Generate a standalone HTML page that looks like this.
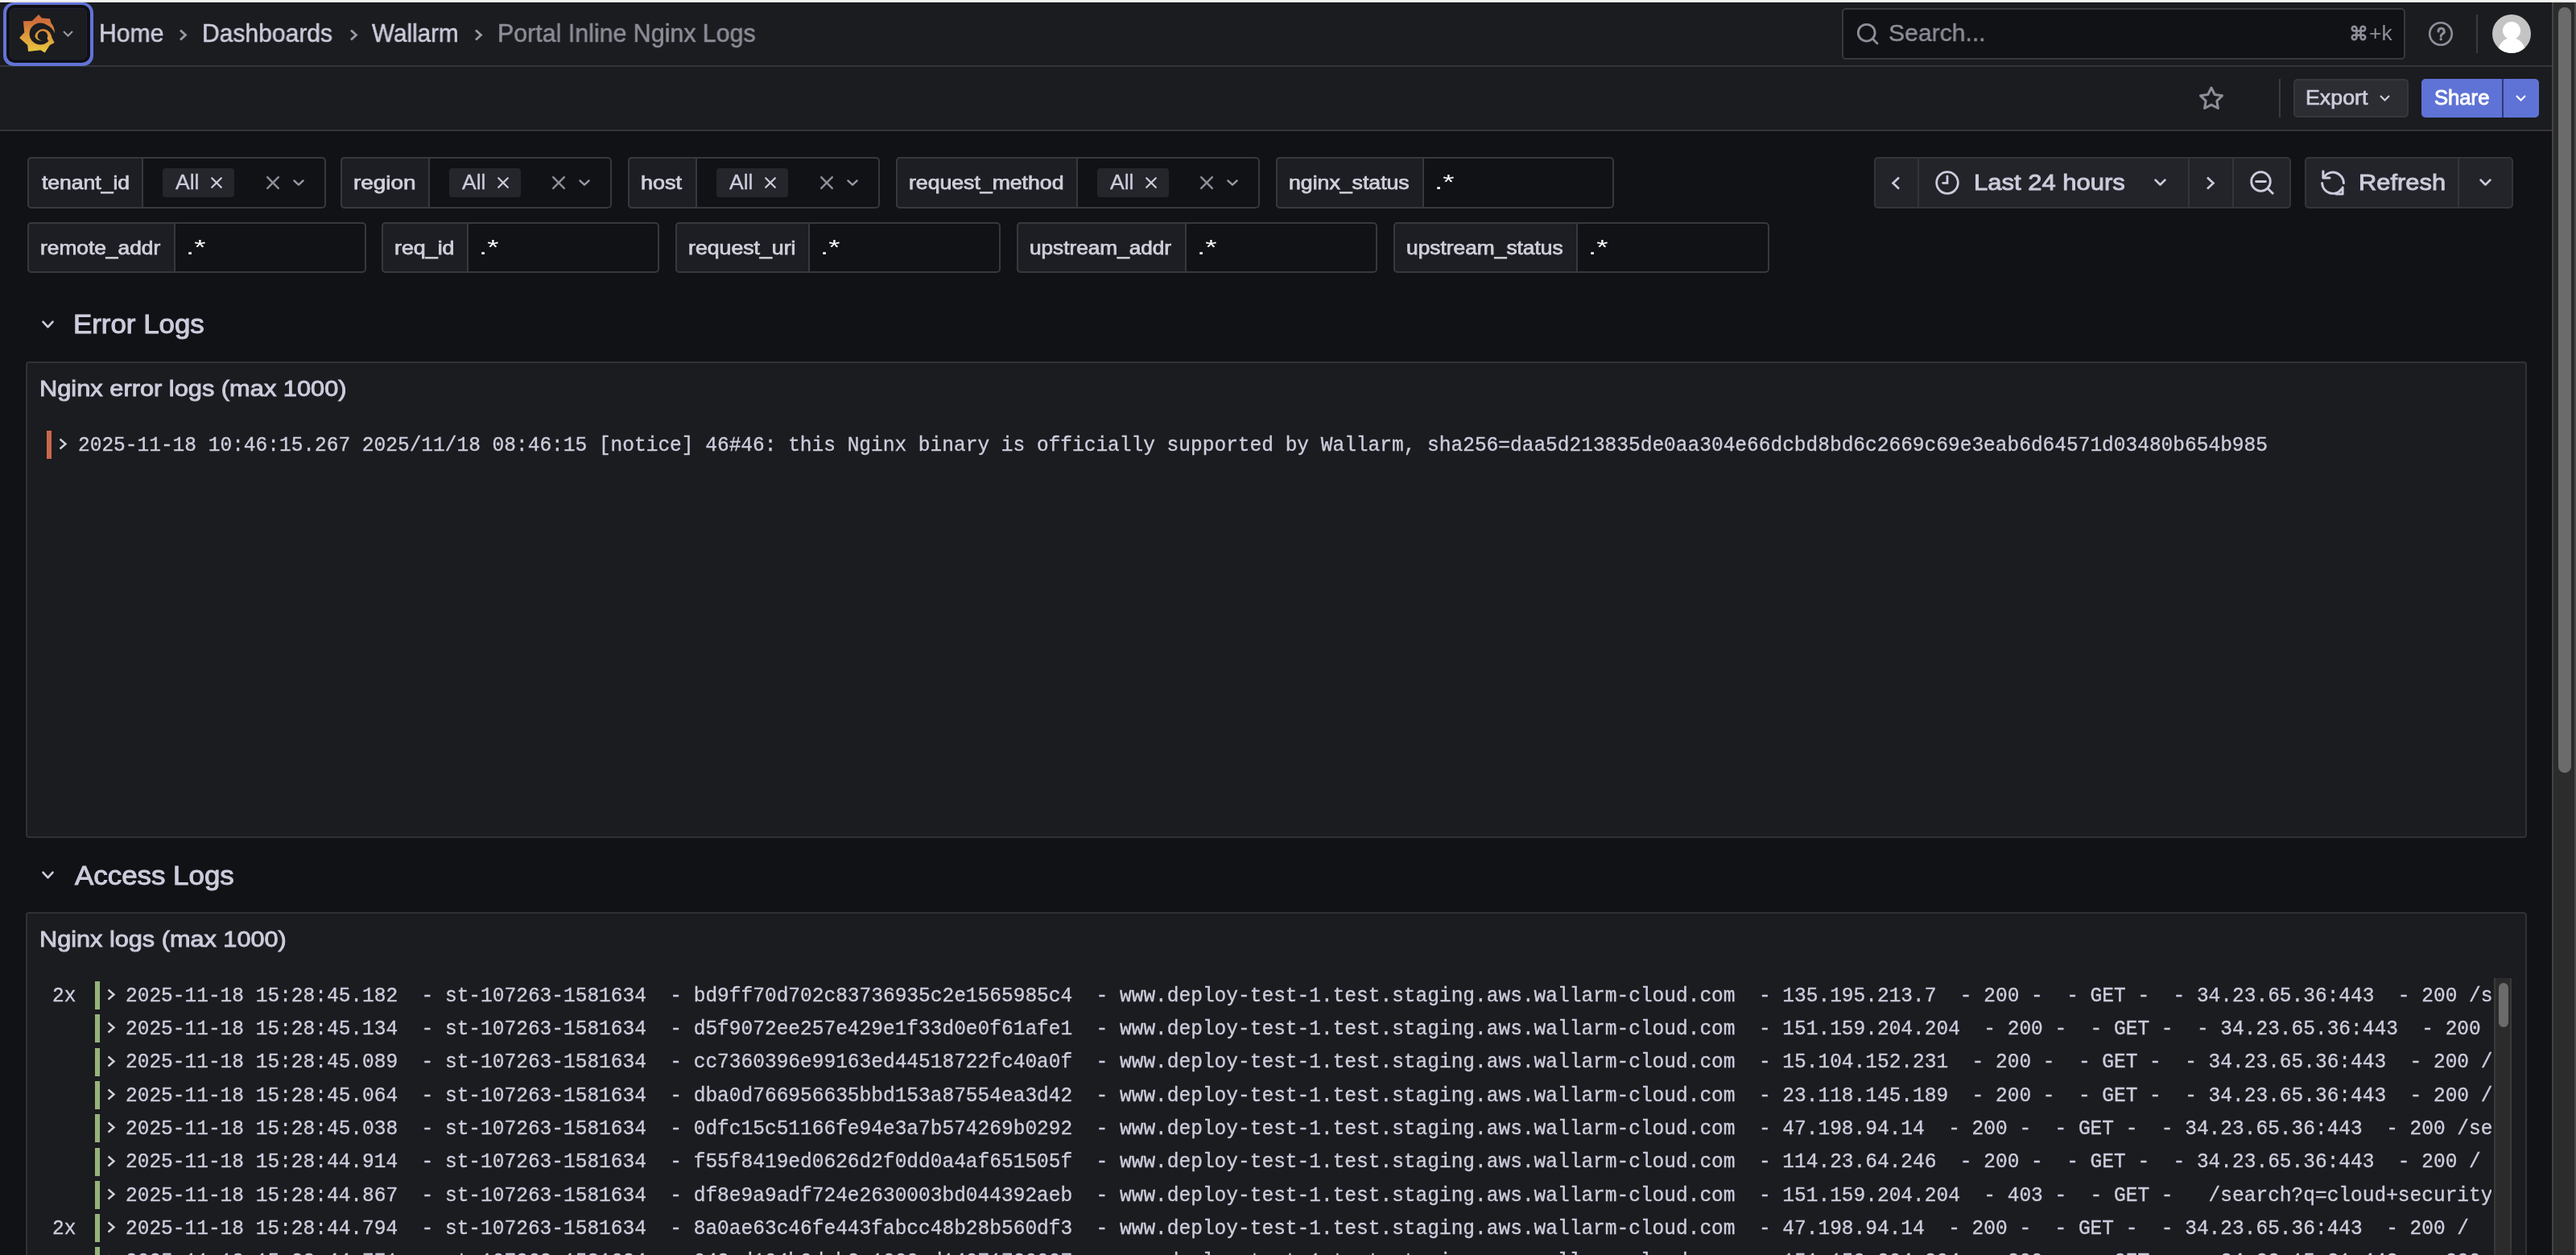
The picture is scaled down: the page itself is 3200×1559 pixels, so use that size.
<!DOCTYPE html><html><head><meta charset="utf-8"><style>
html,body{margin:0;padding:0;width:3200px;height:1559px;overflow:hidden;background:#111216;}
.t{position:absolute;white-space:pre;transform-origin:0 0;font-family:"Liberation Sans",sans-serif;will-change:transform;}
.m{position:absolute;white-space:pre;font-family:"Liberation Mono",monospace;font-size:24.5px;line-height:30px;color:#ccccdc;will-change:transform;transform:scale(1,1.09);transform-origin:0 21.5px;-webkit-text-stroke:0.35px #ccccdc;}
.r{position:absolute;box-sizing:border-box;}
svg.r{overflow:visible;}
@media (max-width:2400px){html{zoom:0.5;}}
</style></head><body>
<div class="r" style="left:0px;top:0px;width:3200px;height:1px;background:#ffffff"></div>
<div class="r" style="left:0px;top:1px;width:3200px;height:1px;background:#e1e1df"></div>
<div class="r" style="left:0px;top:2px;width:3200px;height:1px;background:#efefed"></div>
<div class="r" style="left:0px;top:3px;width:3200px;height:1px;background:#0f1015"></div>
<div class="r" style="left:0px;top:4px;width:3170px;height:77px;background:#1b1c20"></div>
<div class="r" style="left:0px;top:81px;width:3170px;height:2px;background:#34353a"></div>
<div class="r" style="left:0px;top:83px;width:3170px;height:78px;background:#1b1c20"></div>
<div class="r" style="left:0px;top:161px;width:3170px;height:2px;background:#34353a"></div>
<div class="r" style="left:4px;top:3px;width:112px;height:79px;background:#6373d6;border-radius:13px"></div>
<div class="r" style="left:8px;top:6px;width:104px;height:72px;background:#0f1015;border-radius:10px"></div>
<div class="r" style="left:12px;top:10px;width:96px;height:64px;background:#1b1c20;border-radius:6px;border:1px solid #20232f"></div>
<svg class="r" style="left:16px;top:12px;width:60px;height:60px;" viewBox="16 12 60 60" preserveAspectRatio="none"><defs><linearGradient id="lg" gradientUnits="userSpaceOnUse" x1="0" y1="18" x2="0" y2="66"><stop offset="0" stop-color="#d2683a"/><stop offset="0.2" stop-color="#d06f3a"/><stop offset="0.55" stop-color="#df9a3c"/><stop offset="1" stop-color="#e6cb3e"/></linearGradient></defs><path fill="url(#lg)" d="M48,18 L51.9,22.5 L62.1,23.2 L63.5,28.5 Q67.5,33 68.1,40.9 L63.2,44.2 L64.5,47 L67.6,52.9 L61.9,56 L55.7,65.5 L50.4,62.2 L35.1,63.9 L34.2,56 L24.1,46.9 L30.3,40.2 L28.9,26.3 L39.9,25.9 Z"/><circle cx="50.2" cy="42" r="13.6" fill="#1b1c20"/><path fill="#1b1c20" d="M58,31 Q65,34 68.2,41.5 L63.5,45 Z"/><path fill="url(#lg)" d="M64,48.5 A10.2,10.2 0 1 0 43.3,44.8 Q44.5,51.2 54.8,50.6 Q49.5,51 47.2,47.5 A6.3,6.3 0 1 1 58.6,47.6 L60,51 Z"/></svg>
<svg class="r" style="left:78px;top:38px;width:13px;height:8px;" viewBox="0 0 13 8" preserveAspectRatio="none"><path d="M1 1 L6.5 6.5 L12 1" fill="none" stroke="#9a9aa5" stroke-width="2"/></svg>
<div class="t" style="left:123.23px;top:24.07px;font-size:30.52px;line-height:34.10px;color:#ccccdc;font-weight:normal;transform:scaleX(0.9876);-webkit-text-stroke:0.5px #ccccdc;">Home</div>
<div class="t" style="left:251.03px;top:24.07px;font-size:30.52px;line-height:34.10px;color:#ccccdc;font-weight:normal;transform:scaleX(0.9846);-webkit-text-stroke:0.5px #ccccdc;">Dashboards</div>
<div class="t" style="left:462.17px;top:24.07px;font-size:30.52px;line-height:34.10px;color:#ccccdc;font-weight:normal;transform:scaleX(0.9721);-webkit-text-stroke:0.5px #ccccdc;">Wallarm</div>
<div class="t" style="left:617.91px;top:24.07px;font-size:30.52px;line-height:34.10px;color:#8e8e99;font-weight:normal;transform:scaleX(0.9951);-webkit-text-stroke:0.5px #8e8e99;">Portal Inline Nginx Logs</div>
<svg class="r" style="left:222px;top:36px;width:11px;height:15px;" viewBox="0 0 11 15" preserveAspectRatio="none"><path d="M2 1.5 L8.5 7.5 L2 13.5" fill="none" stroke="#9a9aa4" stroke-width="2.8"/></svg>
<svg class="r" style="left:433.7px;top:36px;width:11.0px;height:15px;" viewBox="0 0 11 15" preserveAspectRatio="none"><path d="M2 1.5 L8.5 7.5 L2 13.5" fill="none" stroke="#9a9aa4" stroke-width="2.8"/></svg>
<svg class="r" style="left:589px;top:36px;width:11px;height:15px;" viewBox="0 0 11 15" preserveAspectRatio="none"><path d="M2 1.5 L8.5 7.5 L2 13.5" fill="none" stroke="#9a9aa4" stroke-width="2.8"/></svg>
<div class="r" style="left:2288px;top:10px;width:700px;height:64px;background:#111216;border:2px solid #37383d;border-radius:5px"></div>
<svg class="r" style="left:2306px;top:28px;width:28px;height:28px;" viewBox="0 0 28 28" preserveAspectRatio="none"><circle cx="12.7" cy="12.7" r="10.4" fill="none" stroke="#8e8e99" stroke-width="2.8"/><path d="M20.6 20.6 L26 26" stroke="#8e8e99" stroke-width="2.8" stroke-linecap="round"/></svg>
<div class="t" style="left:2345.73px;top:24.40px;font-size:30.38px;line-height:33.94px;color:#8e8e99;font-weight:normal;transform:scaleX(0.9922);-webkit-text-stroke:0.4px #8e8e99;">Search...</div>
<svg class="r" style="left:2920px;top:31px;width:20px;height:20px;" viewBox="0 0 20 20" preserveAspectRatio="none"><path d="M7.4,7.4 V4.6 A2.8,2.8 0 1 0 4.6,7.4 H15.4 A2.8,2.8 0 1 0 12.6,4.6 V15.4 A2.8,2.8 0 1 0 15.4,12.6 H4.6 A2.8,2.8 0 1 0 7.4,15.4 Z" fill="none" stroke="#8e8e99" stroke-width="2.7"/></svg>
<div class="t" style="left:2942.71px;top:27.01px;font-size:25.73px;line-height:28.74px;color:#8e8e99;font-weight:normal;transform:scaleX(1.0274);">+k</div>
<svg class="r" style="left:3016px;top:26px;width:32px;height:32px;" viewBox="0 0 32 32" preserveAspectRatio="none"><circle cx="16" cy="16" r="13.8" fill="none" stroke="#8e8e99" stroke-width="2.6"/><path d="M13,13 A3.6,3.6 0 1 1 18,16.2 Q16.2,17.2 16.2,19.2" fill="none" stroke="#8e8e99" stroke-width="3" stroke-linecap="round"/><circle cx="16.2" cy="22.8" r="1.7" fill="#8e8e99"/></svg>
<div class="r" style="left:3076px;top:18px;width:2px;height:48px;background:#3a3b40"></div>
<svg class="r" style="left:3096px;top:18px;width:48px;height:48px;" viewBox="0 0 48 48" preserveAspectRatio="none"><defs><clipPath id="av"><circle cx="24" cy="24" r="24"/></clipPath></defs><circle cx="24" cy="24" r="24" fill="#c4c4c4"/><g clip-path="url(#av)" fill="#ffffff"><circle cx="24" cy="20" r="11"/><ellipse cx="24" cy="49" rx="17.5" ry="20"/></g></svg>
<svg class="r" style="left:2731px;top:107px;width:32px;height:30px;" viewBox="0 0 32 30" preserveAspectRatio="none"><path d="M16 2 L20.2 10.5 L29.5 11.8 L22.8 18.3 L24.4 27.5 L16 23.1 L7.6 27.5 L9.2 18.3 L2.5 11.8 L11.8 10.5 Z" fill="none" stroke="#8e8e99" stroke-width="3" stroke-linejoin="round"/></svg>
<div class="r" style="left:2831px;top:98px;width:2px;height:48px;background:#3a3b40"></div>
<div class="r" style="left:2849px;top:98px;width:143px;height:48px;background:#2c2d33;border:2px solid #36373c;border-radius:5px"></div>
<div class="t" style="left:2863.90px;top:106.94px;font-size:25.15px;line-height:28.09px;color:#ccccdc;font-weight:normal;transform:scaleX(1.0649);-webkit-text-stroke:0.7px #ccccdc;">Export</div>
<svg class="r" style="left:2956px;top:118px;width:13px;height:8px;" viewBox="0 0 13 8" preserveAspectRatio="none"><path d="M1 1 L6.5 6.5 L12 1" fill="none" stroke="#ccccdc" stroke-width="2.2"/></svg>
<div class="r" style="left:3008px;top:98px;width:100px;height:48px;background:#5f73d6;border-radius:5px 0 0 5px"></div>
<div class="r" style="left:3108px;top:98px;width:2px;height:48px;background:#2e3a7a"></div>
<div class="r" style="left:3110px;top:98px;width:44px;height:48px;background:#5f73d6;border-radius:0 5px 5px 0"></div>
<div class="t" style="left:3023.84px;top:107.00px;font-size:25.29px;line-height:28.25px;color:#ffffff;font-weight:normal;transform:scaleX(1.0136);-webkit-text-stroke:0.9px #ffffff;">Share</div>
<svg class="r" style="left:3125px;top:118px;width:13px;height:8px;" viewBox="0 0 13 8" preserveAspectRatio="none"><path d="M1 1 L6.5 6.5 L12 1" fill="none" stroke="#ffffff" stroke-width="2.2"/></svg>
<div class="r" style="left:3170px;top:3px;width:2px;height:1556px;background:#434343"></div>
<div class="r" style="left:3172px;top:3px;width:26px;height:1556px;background:#2c2c2c"></div>
<div class="r" style="left:3198px;top:3px;width:2px;height:1556px;background:#4a4a4a"></div>
<div class="r" style="left:3178px;top:9px;width:16px;height:951px;background:#6b6b6b;border-radius:8px"></div>
<div class="r" style="left:34px;top:195px;width:371px;height:64px;background:#111216;border:2px solid #37383d;border-radius:5px"></div>
<div class="r" style="left:34px;top:195px;width:144px;height:64px;background:#1d1e23;border:2px solid #37383d;border-radius:5px 0 0 5px"></div>
<div class="t" style="left:51.60px;top:214.15px;font-size:23.26px;line-height:25.98px;color:#d0d0dc;font-weight:normal;transform:scaleX(1.1402);-webkit-text-stroke:0.75px #d0d0dc;">tenant_id</div>
<div class="r" style="left:202px;top:209px;width:89px;height:36px;background:#25262c;border-radius:4px"></div>
<div class="t" style="left:218.15px;top:211.71px;font-size:26.16px;line-height:29.23px;color:#ccccdc;font-weight:normal;transform:scaleX(1.0156);-webkit-text-stroke:0.3px #ccccdc;">All</div>
<svg class="r" style="left:262px;top:220px;width:14px;height:14px;" viewBox="0 0 14 14" preserveAspectRatio="none"><path d="M1.2 1.2 L12.8 12.8 M12.8 1.2 L1.2 12.8" fill="none" stroke="#ccccdc" stroke-width="2.2" stroke-linecap="round"/></svg>
<svg class="r" style="left:331px;top:219px;width:16px;height:16px;" viewBox="0 0 16 16" preserveAspectRatio="none"><path d="M1.2 1.2 L14.8 14.8 M14.8 1.2 L1.2 14.8" fill="none" stroke="#8e8e99" stroke-width="2.5" stroke-linecap="round"/></svg>
<svg class="r" style="left:364px;top:223px;width:14px;height:8px;" viewBox="0 0 14 8" preserveAspectRatio="none"><path d="M1.4 1.4 L7 6.6 L12.6 1.4" fill="none" stroke="#9a9aa5" stroke-width="2.4" stroke-linecap="round" stroke-linejoin="round"/></svg>
<div class="r" style="left:423px;top:195px;width:337px;height:64px;background:#111216;border:2px solid #37383d;border-radius:5px"></div>
<div class="r" style="left:423px;top:195px;width:111px;height:64px;background:#1d1e23;border:2px solid #37383d;border-radius:5px 0 0 5px"></div>
<div class="t" style="left:439.14px;top:214.15px;font-size:23.26px;line-height:25.98px;color:#d0d0dc;font-weight:normal;transform:scaleX(1.2015);-webkit-text-stroke:0.75px #d0d0dc;">region</div>
<div class="r" style="left:558px;top:209px;width:89px;height:36px;background:#25262c;border-radius:4px"></div>
<div class="t" style="left:574.15px;top:211.71px;font-size:26.16px;line-height:29.23px;color:#ccccdc;font-weight:normal;transform:scaleX(1.0156);-webkit-text-stroke:0.3px #ccccdc;">All</div>
<svg class="r" style="left:618px;top:220px;width:14px;height:14px;" viewBox="0 0 14 14" preserveAspectRatio="none"><path d="M1.2 1.2 L12.8 12.8 M12.8 1.2 L1.2 12.8" fill="none" stroke="#ccccdc" stroke-width="2.2" stroke-linecap="round"/></svg>
<svg class="r" style="left:686px;top:219px;width:16px;height:16px;" viewBox="0 0 16 16" preserveAspectRatio="none"><path d="M1.2 1.2 L14.8 14.8 M14.8 1.2 L1.2 14.8" fill="none" stroke="#8e8e99" stroke-width="2.5" stroke-linecap="round"/></svg>
<svg class="r" style="left:719px;top:223px;width:14px;height:8px;" viewBox="0 0 14 8" preserveAspectRatio="none"><path d="M1.4 1.4 L7 6.6 L12.6 1.4" fill="none" stroke="#9a9aa5" stroke-width="2.4" stroke-linecap="round" stroke-linejoin="round"/></svg>
<div class="r" style="left:780px;top:195px;width:313px;height:64px;background:#111216;border:2px solid #37383d;border-radius:5px"></div>
<div class="r" style="left:780px;top:195px;width:86px;height:64px;background:#1d1e23;border:2px solid #37383d;border-radius:5px 0 0 5px"></div>
<div class="t" style="left:796.13px;top:214.15px;font-size:23.26px;line-height:25.98px;color:#d0d0dc;font-weight:normal;transform:scaleX(1.1619);-webkit-text-stroke:0.75px #d0d0dc;">host</div>
<div class="r" style="left:890px;top:209px;width:89px;height:36px;background:#25262c;border-radius:4px"></div>
<div class="t" style="left:906.15px;top:211.71px;font-size:26.16px;line-height:29.23px;color:#ccccdc;font-weight:normal;transform:scaleX(1.0156);-webkit-text-stroke:0.3px #ccccdc;">All</div>
<svg class="r" style="left:950px;top:220px;width:14px;height:14px;" viewBox="0 0 14 14" preserveAspectRatio="none"><path d="M1.2 1.2 L12.8 12.8 M12.8 1.2 L1.2 12.8" fill="none" stroke="#ccccdc" stroke-width="2.2" stroke-linecap="round"/></svg>
<svg class="r" style="left:1019px;top:219px;width:16px;height:16px;" viewBox="0 0 16 16" preserveAspectRatio="none"><path d="M1.2 1.2 L14.8 14.8 M14.8 1.2 L1.2 14.8" fill="none" stroke="#8e8e99" stroke-width="2.5" stroke-linecap="round"/></svg>
<svg class="r" style="left:1052px;top:223px;width:14px;height:8px;" viewBox="0 0 14 8" preserveAspectRatio="none"><path d="M1.4 1.4 L7 6.6 L12.6 1.4" fill="none" stroke="#9a9aa5" stroke-width="2.4" stroke-linecap="round" stroke-linejoin="round"/></svg>
<div class="r" style="left:1113px;top:195px;width:452px;height:64px;background:#111216;border:2px solid #37383d;border-radius:5px"></div>
<div class="r" style="left:1113px;top:195px;width:226px;height:64px;background:#1d1e23;border:2px solid #37383d;border-radius:5px 0 0 5px"></div>
<div class="t" style="left:1129.23px;top:214.15px;font-size:23.26px;line-height:25.98px;color:#d0d0dc;font-weight:normal;transform:scaleX(1.1453);-webkit-text-stroke:0.75px #d0d0dc;">request_method</div>
<div class="r" style="left:1363px;top:209px;width:89px;height:36px;background:#25262c;border-radius:4px"></div>
<div class="t" style="left:1379.15px;top:211.71px;font-size:26.16px;line-height:29.23px;color:#ccccdc;font-weight:normal;transform:scaleX(1.0156);-webkit-text-stroke:0.3px #ccccdc;">All</div>
<svg class="r" style="left:1423px;top:220px;width:14px;height:14px;" viewBox="0 0 14 14" preserveAspectRatio="none"><path d="M1.2 1.2 L12.8 12.8 M12.8 1.2 L1.2 12.8" fill="none" stroke="#ccccdc" stroke-width="2.2" stroke-linecap="round"/></svg>
<svg class="r" style="left:1491px;top:219px;width:16px;height:16px;" viewBox="0 0 16 16" preserveAspectRatio="none"><path d="M1.2 1.2 L14.8 14.8 M14.8 1.2 L1.2 14.8" fill="none" stroke="#8e8e99" stroke-width="2.5" stroke-linecap="round"/></svg>
<svg class="r" style="left:1524px;top:223px;width:14px;height:8px;" viewBox="0 0 14 8" preserveAspectRatio="none"><path d="M1.4 1.4 L7 6.6 L12.6 1.4" fill="none" stroke="#9a9aa5" stroke-width="2.4" stroke-linecap="round" stroke-linejoin="round"/></svg>
<div class="r" style="left:1585px;top:195px;width:420px;height:64px;background:#111216;border:2px solid #37383d;border-radius:5px"></div>
<div class="r" style="left:1585px;top:195px;width:184px;height:64px;background:#1d1e23;border:2px solid #37383d;border-radius:5px 0 0 5px"></div>
<div class="t" style="left:1601.23px;top:214.15px;font-size:23.26px;line-height:25.98px;color:#d0d0dc;font-weight:normal;transform:scaleX(1.1467);-webkit-text-stroke:0.75px #d0d0dc;">nginx_status</div>
<div class="t" style="left:1782.16px;top:211.97px;font-size:25.44px;line-height:28.42px;color:#ffffff;font-weight:normal;transform:scaleX(1.4390);">.*</div>
<div class="r" style="left:34px;top:276px;width:421px;height:63px;background:#111216;border:2px solid #37383d;border-radius:5px"></div>
<div class="r" style="left:34px;top:276px;width:184px;height:63px;background:#1d1e23;border:2px solid #37383d;border-radius:5px 0 0 5px"></div>
<div class="t" style="left:50.25px;top:295.15px;font-size:23.26px;line-height:25.98px;color:#d0d0dc;font-weight:normal;transform:scaleX(1.1314);-webkit-text-stroke:0.75px #d0d0dc;">remote_addr</div>
<div class="t" style="left:231.16px;top:292.97px;font-size:25.44px;line-height:28.42px;color:#ffffff;font-weight:normal;transform:scaleX(1.4390);">.*</div>
<div class="r" style="left:474px;top:276px;width:345px;height:63px;background:#111216;border:2px solid #37383d;border-radius:5px"></div>
<div class="r" style="left:474px;top:276px;width:108px;height:63px;background:#1d1e23;border:2px solid #37383d;border-radius:5px 0 0 5px"></div>
<div class="t" style="left:490.22px;top:295.15px;font-size:23.26px;line-height:25.98px;color:#d0d0dc;font-weight:normal;transform:scaleX(1.1525);-webkit-text-stroke:0.75px #d0d0dc;">req_id</div>
<div class="t" style="left:595.16px;top:292.97px;font-size:25.44px;line-height:28.42px;color:#ffffff;font-weight:normal;transform:scaleX(1.4390);">.*</div>
<div class="r" style="left:839px;top:276px;width:404px;height:63px;background:#111216;border:2px solid #37383d;border-radius:5px"></div>
<div class="r" style="left:839px;top:276px;width:167px;height:63px;background:#1d1e23;border:2px solid #37383d;border-radius:5px 0 0 5px"></div>
<div class="t" style="left:855.23px;top:295.15px;font-size:23.26px;line-height:25.98px;color:#d0d0dc;font-weight:normal;transform:scaleX(1.1480);-webkit-text-stroke:0.75px #d0d0dc;">request_uri</div>
<div class="t" style="left:1019.16px;top:292.97px;font-size:25.44px;line-height:28.42px;color:#ffffff;font-weight:normal;transform:scaleX(1.4390);">.*</div>
<div class="r" style="left:1263px;top:276px;width:448px;height:63px;background:#111216;border:2px solid #37383d;border-radius:5px"></div>
<div class="r" style="left:1263px;top:276px;width:211px;height:63px;background:#1d1e23;border:2px solid #37383d;border-radius:5px 0 0 5px"></div>
<div class="t" style="left:1279.30px;top:295.15px;font-size:23.26px;line-height:25.98px;color:#d0d0dc;font-weight:normal;transform:scaleX(1.1260);-webkit-text-stroke:0.75px #d0d0dc;">upstream_addr</div>
<div class="t" style="left:1487.16px;top:292.97px;font-size:25.44px;line-height:28.42px;color:#ffffff;font-weight:normal;transform:scaleX(1.4390);">.*</div>
<div class="r" style="left:1731px;top:276px;width:467px;height:63px;background:#111216;border:2px solid #37383d;border-radius:5px"></div>
<div class="r" style="left:1731px;top:276px;width:229px;height:63px;background:#1d1e23;border:2px solid #37383d;border-radius:5px 0 0 5px"></div>
<div class="t" style="left:1747.29px;top:295.15px;font-size:23.26px;line-height:25.98px;color:#d0d0dc;font-weight:normal;transform:scaleX(1.1323);-webkit-text-stroke:0.75px #d0d0dc;">upstream_status</div>
<div class="t" style="left:1973.16px;top:292.97px;font-size:25.44px;line-height:28.42px;color:#ffffff;font-weight:normal;transform:scaleX(1.4390);">.*</div>
<div class="r" style="left:2328px;top:195px;width:518px;height:64px;background:#23242a;border:2px solid #34353a;border-radius:5px"></div>
<div class="r" style="left:2382px;top:195px;width:2px;height:64px;background:#34353a"></div>
<div class="r" style="left:2718px;top:195px;width:2px;height:64px;background:#34353a"></div>
<div class="r" style="left:2773px;top:195px;width:2px;height:64px;background:#34353a"></div>
<svg class="r" style="left:2349px;top:219px;width:12px;height:17px;" viewBox="0 0 12 17" preserveAspectRatio="none"><path d="M10 1.5 L2.5 8.5 L10 15.5" fill="none" stroke="#ccccdc" stroke-width="2.6"/></svg>
<svg class="r" style="left:2740px;top:219px;width:12px;height:17px;" viewBox="0 0 12 17" preserveAspectRatio="none"><path d="M2 1.5 L9.5 8.5 L2 15.5" fill="none" stroke="#ccccdc" stroke-width="2.6"/></svg>
<svg class="r" style="left:2404px;top:212px;width:30px;height:30px;" viewBox="0 0 30 30" preserveAspectRatio="none"><circle cx="15" cy="15" r="13.3" fill="none" stroke="#ccccdc" stroke-width="2.8"/><path d="M15 7 L15 15.3 L9.6 15.3" fill="none" stroke="#ccccdc" stroke-width="2.8" stroke-linecap="round"/></svg>
<div class="t" style="left:2452.16px;top:210.87px;font-size:28.20px;line-height:31.50px;color:#ccccdc;font-weight:normal;transform:scaleX(1.0995);-webkit-text-stroke:0.9px #ccccdc;">Last 24 hours</div>
<svg class="r" style="left:2676px;top:222px;width:15px;height:9px;" viewBox="0 0 14 8" preserveAspectRatio="none"><path d="M1.4 1.4 L7 6.6 L12.6 1.4" fill="none" stroke="#ccccdc" stroke-width="2.4" stroke-linecap="round" stroke-linejoin="round"/></svg>
<svg class="r" style="left:2795px;top:212px;width:31px;height:31px;" viewBox="0 0 31 31" preserveAspectRatio="none"><circle cx="13.5" cy="13.5" r="11.8" fill="none" stroke="#ccccdc" stroke-width="2.8"/><path d="M7.6 13.5 L19.4 13.5" stroke="#ccccdc" stroke-width="2.8" stroke-linecap="round"/><path d="M22 22 L29 29" stroke="#ccccdc" stroke-width="2.8"/></svg>
<div class="r" style="left:2863px;top:195px;width:259px;height:64px;background:#23242a;border:2px solid #34353a;border-radius:5px"></div>
<div class="r" style="left:3053px;top:195px;width:2px;height:64px;background:#34353a"></div>
<svg class="r" style="left:2870px;top:200px;width:60px;height:55px;" viewBox="2870 200 60 55" preserveAspectRatio="none"><g fill="none" stroke="#ccccdc" stroke-width="3" stroke-linecap="round" stroke-linejoin="round"><path d="M2887.3,219.4 A13.4,13.4 0 0 1 2911.4,227.4"/><path d="M2885.9,212.8 L2885.9,221 L2894,221"/><path d="M2884.6,227.4 A13.4,13.4 0 0 0 2908.7,235"/><path d="M2910.1,232.8 L2910.1,240.9 L2902,240.9"/></g></svg>
<div class="t" style="left:2930.47px;top:210.87px;font-size:28.20px;line-height:31.50px;color:#ccccdc;font-weight:normal;transform:scaleX(1.0953);-webkit-text-stroke:0.9px #ccccdc;">Refresh</div>
<svg class="r" style="left:3080px;top:222px;width:15px;height:9px;" viewBox="0 0 14 8" preserveAspectRatio="none"><path d="M1.4 1.4 L7 6.6 L12.6 1.4" fill="none" stroke="#ccccdc" stroke-width="2.4" stroke-linecap="round" stroke-linejoin="round"/></svg>
<svg class="r" style="left:52px;top:398px;width:15px;height:10px;" viewBox="0 0 14 8" preserveAspectRatio="none"><path d="M1.4 1.4 L7 6.6 L12.6 1.4" fill="none" stroke="#ccccdc" stroke-width="2.4" stroke-linecap="round" stroke-linejoin="round"/></svg>
<div class="t" style="left:90.84px;top:383.70px;font-size:33.14px;line-height:37.02px;color:#ccccdc;font-weight:normal;transform:scaleX(1.0524);-webkit-text-stroke:1.0px #ccccdc;">Error Logs</div>
<div class="r" style="left:32px;top:449px;width:3107px;height:592px;background:#1b1c20;border:2px solid #303136;border-radius:4px"></div>
<div class="t" style="left:48.97px;top:467.47px;font-size:27.76px;line-height:31.02px;color:#ccccdc;font-weight:normal;transform:scaleX(1.1095);-webkit-text-stroke:0.9px #ccccdc;">Nginx error logs (max 1000)</div>
<div class="r" style="left:58px;top:535px;width:6px;height:35px;background:#c8684c"></div>
<svg class="r" style="left:73px;top:544px;width:10px;height:15px;" viewBox="0 0 10 15" preserveAspectRatio="none"><path d="M1.5 1.5 L8.5 7.5 L1.5 13.5" fill="none" stroke="#d0d0dc" stroke-width="2.4"/></svg>
<div class="m" style="left:96.5px;top:539.48px;">2025-11-18 10:46:15.267 2025/11/18 08:46:15 [notice] 46#46: this Nginx binary is officially supported by Wallarm, sha256=daa5d213835de0aa304e66dcbd8bd6c2669c69e3eab6d64571d03480b654b985</div>
<svg class="r" style="left:52px;top:1082px;width:15px;height:10px;" viewBox="0 0 14 8" preserveAspectRatio="none"><path d="M1.4 1.4 L7 6.6 L12.6 1.4" fill="none" stroke="#ccccdc" stroke-width="2.4" stroke-linecap="round" stroke-linejoin="round"/></svg>
<div class="t" style="left:93.43px;top:1068.50px;font-size:33.14px;line-height:37.02px;color:#ccccdc;font-weight:normal;transform:scaleX(1.0529);-webkit-text-stroke:1.0px #ccccdc;">Access Logs</div>
<div class="r" style="left:32px;top:1133px;width:3107px;height:467px;background:#1b1c20;border:2px solid #303136;border-radius:4px"></div>
<div class="t" style="left:48.98px;top:1151.47px;font-size:27.76px;line-height:31.02px;color:#ccccdc;font-weight:normal;transform:scaleX(1.1051);-webkit-text-stroke:0.9px #ccccdc;">Nginx logs (max 1000)</div>
<div class="r" style="left:40px;top:1200px;width:3055px;height:400px;overflow:hidden">
<div class="m" style="left:24.599999999999994px;top:22.78px;">2x</div>
<div class="r" style="left:78px;top:19.00px;width:6px;height:35px;background:#96b37b"></div>
<svg class="r" style="left:93px;top:28.00px;width:10px;height:15px" viewBox="0 0 10 15"><path d="M1.5 1.5 L8.5 7.5 L1.5 13.5" fill="none" stroke="#d0d0dc" stroke-width="2.4"/></svg>
<div class="m" style="left:116.19999999999999px;top:22.78px;">2025-11-18 15:28:45.182  - st-107263-1581634  - bd9ff70d702c83736935c2e1565985c4  - www.deploy-test-1.test.staging.aws.wallarm-cloud.com  - 135.195.213.7  - 200 -  - GET -  - 34.23.65.36:443  - 200 /search</div>
<div class="r" style="left:78px;top:60.30px;width:6px;height:35px;background:#96b37b"></div>
<svg class="r" style="left:93px;top:69.30px;width:10px;height:15px" viewBox="0 0 10 15"><path d="M1.5 1.5 L8.5 7.5 L1.5 13.5" fill="none" stroke="#d0d0dc" stroke-width="2.4"/></svg>
<div class="m" style="left:116.19999999999999px;top:64.08px;">2025-11-18 15:28:45.134  - st-107263-1581634  - d5f9072ee257e429e1f33d0e0f61afe1  - www.deploy-test-1.test.staging.aws.wallarm-cloud.com  - 151.159.204.204  - 200 -  - GET -  - 34.23.65.36:443  - 200 /</div>
<div class="r" style="left:78px;top:101.60px;width:6px;height:35px;background:#96b37b"></div>
<svg class="r" style="left:93px;top:110.60px;width:10px;height:15px" viewBox="0 0 10 15"><path d="M1.5 1.5 L8.5 7.5 L1.5 13.5" fill="none" stroke="#d0d0dc" stroke-width="2.4"/></svg>
<div class="m" style="left:116.19999999999999px;top:105.38px;">2025-11-18 15:28:45.089  - st-107263-1581634  - cc7360396e99163ed44518722fc40a0f  - www.deploy-test-1.test.staging.aws.wallarm-cloud.com  - 15.104.152.231  - 200 -  - GET -  - 34.23.65.36:443  - 200 /</div>
<div class="r" style="left:78px;top:142.90px;width:6px;height:35px;background:#96b37b"></div>
<svg class="r" style="left:93px;top:151.90px;width:10px;height:15px" viewBox="0 0 10 15"><path d="M1.5 1.5 L8.5 7.5 L1.5 13.5" fill="none" stroke="#d0d0dc" stroke-width="2.4"/></svg>
<div class="m" style="left:116.19999999999999px;top:146.68px;">2025-11-18 15:28:45.064  - st-107263-1581634  - dba0d766956635bbd153a87554ea3d42  - www.deploy-test-1.test.staging.aws.wallarm-cloud.com  - 23.118.145.189  - 200 -  - GET -  - 34.23.65.36:443  - 200 /</div>
<div class="r" style="left:78px;top:184.20px;width:6px;height:35px;background:#96b37b"></div>
<svg class="r" style="left:93px;top:193.20px;width:10px;height:15px" viewBox="0 0 10 15"><path d="M1.5 1.5 L8.5 7.5 L1.5 13.5" fill="none" stroke="#d0d0dc" stroke-width="2.4"/></svg>
<div class="m" style="left:116.19999999999999px;top:187.98px;">2025-11-18 15:28:45.038  - st-107263-1581634  - 0dfc15c51166fe94e3a7b574269b0292  - www.deploy-test-1.test.staging.aws.wallarm-cloud.com  - 47.198.94.14  - 200 -  - GET -  - 34.23.65.36:443  - 200 /search</div>
<div class="r" style="left:78px;top:225.50px;width:6px;height:35px;background:#96b37b"></div>
<svg class="r" style="left:93px;top:234.50px;width:10px;height:15px" viewBox="0 0 10 15"><path d="M1.5 1.5 L8.5 7.5 L1.5 13.5" fill="none" stroke="#d0d0dc" stroke-width="2.4"/></svg>
<div class="m" style="left:116.19999999999999px;top:229.28px;">2025-11-18 15:28:44.914  - st-107263-1581634  - f55f8419ed0626d2f0dd0a4af651505f  - www.deploy-test-1.test.staging.aws.wallarm-cloud.com  - 114.23.64.246  - 200 -  - GET -  - 34.23.65.36:443  - 200 /</div>
<div class="r" style="left:78px;top:266.80px;width:6px;height:35px;background:#96b37b"></div>
<svg class="r" style="left:93px;top:275.80px;width:10px;height:15px" viewBox="0 0 10 15"><path d="M1.5 1.5 L8.5 7.5 L1.5 13.5" fill="none" stroke="#d0d0dc" stroke-width="2.4"/></svg>
<div class="m" style="left:116.19999999999999px;top:270.58px;">2025-11-18 15:28:44.867  - st-107263-1581634  - df8e9a9adf724e2630003bd044392aeb  - www.deploy-test-1.test.staging.aws.wallarm-cloud.com  - 151.159.204.204  - 403 -  - GET -   /search?q=cloud+security</div>
<div class="m" style="left:24.599999999999994px;top:311.88px;">2x</div>
<div class="r" style="left:78px;top:308.10px;width:6px;height:35px;background:#96b37b"></div>
<svg class="r" style="left:93px;top:317.10px;width:10px;height:15px" viewBox="0 0 10 15"><path d="M1.5 1.5 L8.5 7.5 L1.5 13.5" fill="none" stroke="#d0d0dc" stroke-width="2.4"/></svg>
<div class="m" style="left:116.19999999999999px;top:311.88px;">2025-11-18 15:28:44.794  - st-107263-1581634  - 8a0ae63c46fe443fabcc48b28b560df3  - www.deploy-test-1.test.staging.aws.wallarm-cloud.com  - 47.198.94.14  - 200 -  - GET -  - 34.23.65.36:443  - 200 /</div>
<div class="r" style="left:78px;top:349.40px;width:6px;height:35px;background:#96b37b"></div>
<svg class="r" style="left:93px;top:358.40px;width:10px;height:15px" viewBox="0 0 10 15"><path d="M1.5 1.5 L8.5 7.5 L1.5 13.5" fill="none" stroke="#d0d0dc" stroke-width="2.4"/></svg>
<div class="m" style="left:116.19999999999999px;top:353.18px;">2025-11-18 15:28:44.771  - st-107263-1581634  - 043ad104b0dab2e1000ad14071720007  - www.deploy-test-1.test.staging.aws.wallarm-cloud.com  - 151.159.204.204  - 200 -  - GET -  - 34.23.15.31:443  - 200 /</div>
</div>
<div class="r" style="left:3098px;top:1215px;width:2px;height:385px;background:#3a3a3a"></div>
<div class="r" style="left:3100px;top:1215px;width:20px;height:385px;background:#2b2b2b"></div>
<div class="r" style="left:3118px;top:1215px;width:2px;height:385px;background:#3a3a3a"></div>
<div class="r" style="left:3104px;top:1221px;width:12px;height:55px;background:#6b6b6b;border-radius:6px"></div>
</body></html>
